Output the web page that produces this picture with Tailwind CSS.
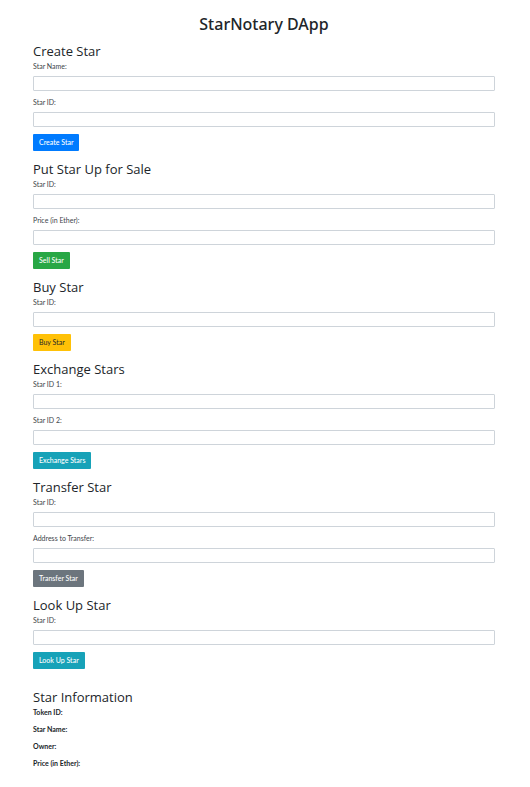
<!DOCTYPE html>
<html lang="en">
<head>
<meta charset="utf-8">
<meta name="viewport" content="width=device-width, initial-scale=1">
<title>StarNotary DApp</title>
<script src="https://cdn.jsdelivr.net/npm/@tailwindcss/browser@4"></script>
</head>
<body class="bg-white font-['Lato','Open_Sans',sans-serif] text-[#212529]">
<main class="pl-[33px] pr-[35px] pt-3 pb-4 text-[7px] leading-[8px]">
  <h1 class="mb-1.5 text-center font-['Noto_Sans',sans-serif] text-[16px] leading-6 font-medium">StarNotary DApp</h1>

  <div class="flex flex-col gap-[9px]">
    <form>
      <h2 class="mb-0.5 font-['Open_Sans',sans-serif] text-[13px] leading-[18px] font-medium">Create Star</h2>
      <div class="mb-[7px]"><label for="create-name" class="mb-1.5 block text-[#40454a]">Star Name:</label><input id="create-name" type="text" class="block h-[15px] w-full rounded-[1px] border border-[#ced4da] px-1.5"></div>
      <div class="mb-[7px]"><label for="create-id" class="mb-1.5 block text-[#40454a]">Star ID:</label><input id="create-id" type="text" class="block h-[15px] w-full rounded-[1px] border border-[#ced4da] px-1.5"></div>
      <button type="button" class="block h-[17px] rounded-[1px] bg-[#007bff] px-1.5 pb-0.5 font-medium text-white">Create Star</button>
    </form>

    <form>
      <h2 class="mb-0.5 font-['Open_Sans',sans-serif] text-[13px] leading-[18px] font-medium">Put Star Up for Sale</h2>
      <div class="mb-[7px]"><label for="sell-id" class="mb-1.5 block text-[#40454a]">Star ID:</label><input id="sell-id" type="text" class="block h-[15px] w-full rounded-[1px] border border-[#ced4da] px-1.5"></div>
      <div class="mb-[7px]"><label for="sell-price" class="mb-1.5 block text-[#40454a]">Price (in Ether):</label><input id="sell-price" type="text" class="block h-[15px] w-full rounded-[1px] border border-[#ced4da] px-1.5"></div>
      <button type="button" class="block h-[17px] rounded-[1px] bg-[#28a745] px-1.5 pb-0.5 font-medium text-white">Sell Star</button>
    </form>

    <form>
      <h2 class="mb-0.5 font-['Open_Sans',sans-serif] text-[13px] leading-[18px] font-medium">Buy Star</h2>
      <div class="mb-[7px]"><label for="buy-id" class="mb-1.5 block text-[#40454a]">Star ID:</label><input id="buy-id" type="text" class="block h-[15px] w-full rounded-[1px] border border-[#ced4da] px-1.5"></div>
      <button type="button" class="block h-[17px] rounded-[1px] bg-[#ffc107] px-1.5 pb-0.5 text-[#212529]">Buy Star</button>
    </form>

    <form>
      <h2 class="mb-0.5 font-['Open_Sans',sans-serif] text-[13px] leading-[18px] font-medium">Exchange Stars</h2>
      <div class="mb-[7px]"><label for="exchange-id-1" class="mb-1.5 block text-[#40454a]">Star ID 1:</label><input id="exchange-id-1" type="text" class="block h-[15px] w-full rounded-[1px] border border-[#ced4da] px-1.5"></div>
      <div class="mb-[7px]"><label for="exchange-id-2" class="mb-1.5 block text-[#40454a]">Star ID 2:</label><input id="exchange-id-2" type="text" class="block h-[15px] w-full rounded-[1px] border border-[#ced4da] px-1.5"></div>
      <button type="button" class="block h-[17px] rounded-[1px] bg-[#17a2b8] px-1.5 pb-0.5 font-medium text-white">Exchange Stars</button>
    </form>

    <form>
      <h2 class="mb-0.5 font-['Open_Sans',sans-serif] text-[13px] leading-[18px] font-medium">Transfer Star</h2>
      <div class="mb-[7px]"><label for="transfer-id" class="mb-1.5 block text-[#40454a]">Star ID:</label><input id="transfer-id" type="text" class="block h-[15px] w-full rounded-[1px] border border-[#ced4da] px-1.5"></div>
      <div class="mb-[7px]"><label for="transfer-address" class="mb-1.5 block text-[#40454a]">Address to Transfer:</label><input id="transfer-address" type="text" class="block h-[15px] w-full rounded-[1px] border border-[#ced4da] px-1.5"></div>
      <button type="button" class="block h-[17px] rounded-[1px] bg-[#6c757d] px-1.5 pb-0.5 font-medium text-white">Transfer Star</button>
    </form>

    <form>
      <h2 class="mb-0.5 font-['Open_Sans',sans-serif] text-[13px] leading-[18px] font-medium">Look Up Star</h2>
      <div class="mb-[7px]"><label for="lookup-id" class="mb-1.5 block text-[#40454a]">Star ID:</label><input id="lookup-id" type="text" class="block h-[15px] w-full rounded-[1px] border border-[#ced4da] px-1.5"></div>
      <button type="button" class="block h-[17px] rounded-[1px] bg-[#17a2b8] px-1.5 pb-0.5 font-medium text-white">Look Up Star</button>
    </form>
  </div>

  <section class="mt-[19px]">
    <h2 class="mb-0.5 font-['Open_Sans',sans-serif] text-[13px] leading-[18px]">Star Information</h2>
    <div class="flex flex-col gap-[9px] font-bold">
      <p>Token ID:</p>
      <p>Star Name:</p>
      <p>Owner:</p>
      <p>Price (in Ether):</p>
    </div>
  </section>
</main>
</body>
</html>
